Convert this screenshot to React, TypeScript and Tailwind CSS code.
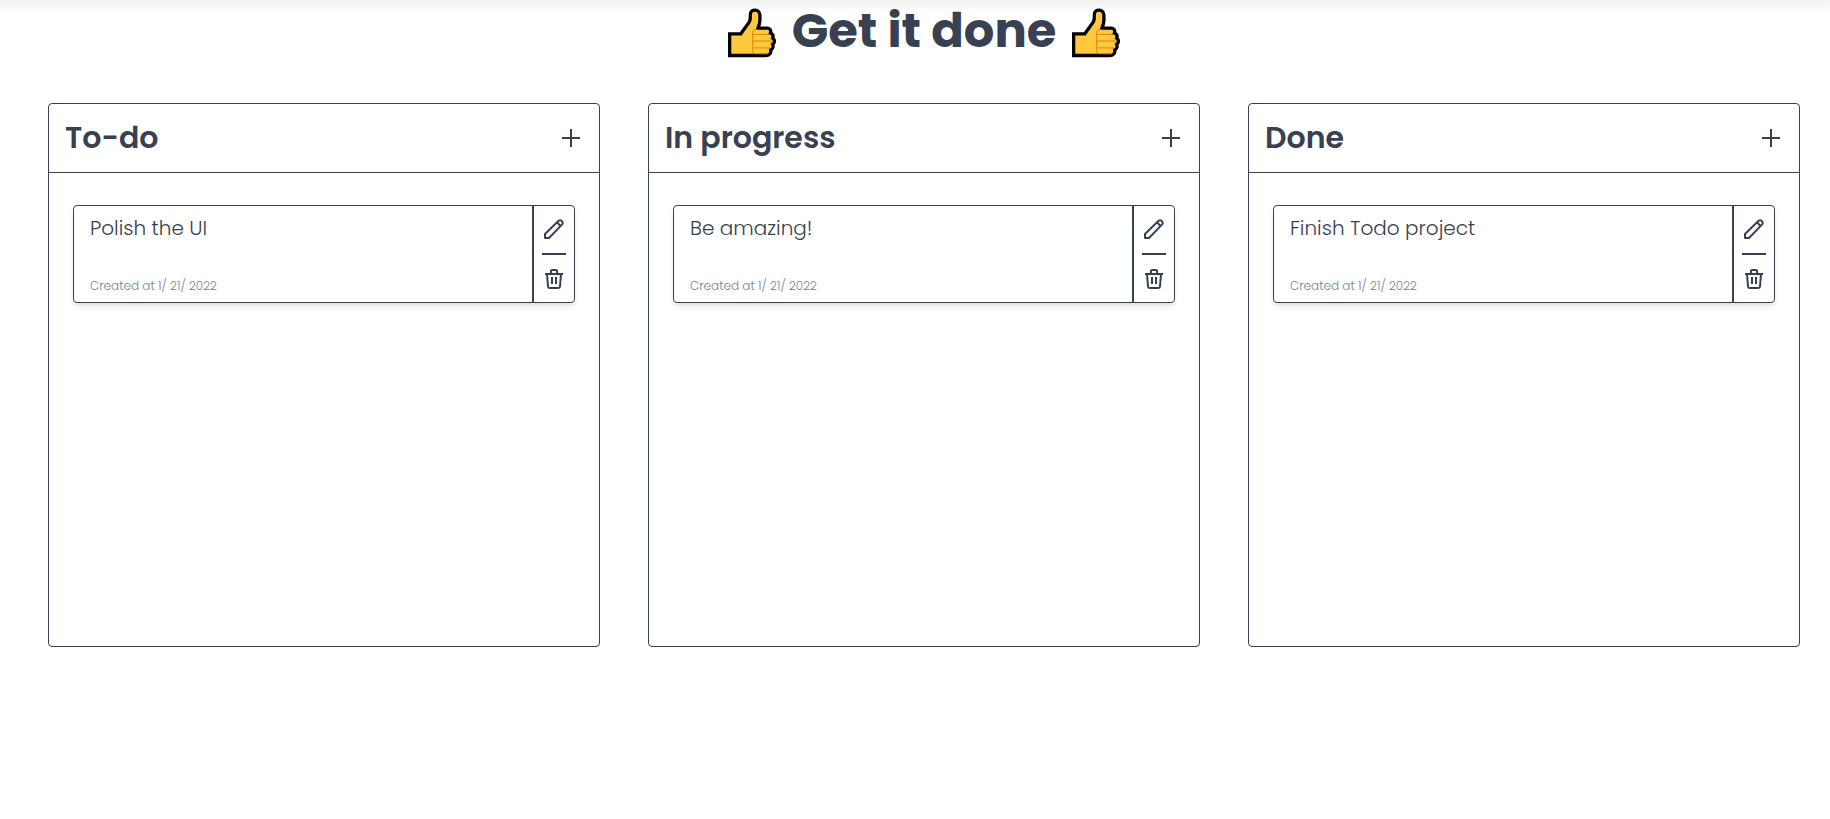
import { useState } from "react";

interface Task {
  id: number;
  text: string;
  createdAt: string;
}

interface Column {
  name: string;
  tasks: Task[];
}

const initialColumns: Column[] = [
  {
    name: "To-do",
    tasks: [{ id: 1, text: "Polish the UI", createdAt: "1/ 21/ 2022" }],
  },
  {
    name: "In progress",
    tasks: [{ id: 2, text: "Be amazing!", createdAt: "1/ 21/ 2022" }],
  },
  {
    name: "Done",
    tasks: [{ id: 3, text: "Finish Todo project", createdAt: "1/ 21/ 2022" }],
  },
];

function ThumbsUp() {
  return (
    <svg viewBox="23 11 146 161" className="h-[54px] w-12" aria-hidden="true">
      <path
        d="M28 100H62L88 64C91 59 91 52 91 45V41C91 23 120 23 120 43V60C120 68 117 75 114 83H142C151 83 155 90 152 98C160 100 162 107 159 113C166 118 166 128 159 132C162 139 159 147 153 149C155 158 149 166 140 166H28Z"
        fill="#ffc83d"
        stroke="#000"
        strokeWidth="10"
      />
      <path
        d="M113 87H107Q98 87 98 96V152Q98 161 107 161H146M98 102H148M98 122H156M98 143H151"
        fill="none"
        stroke="#d67d00"
        strokeWidth="3"
        opacity="0.85"
      />
    </svg>
  );
}

function PlusIcon() {
  return (
    <svg viewBox="0 0 24 24" className="size-6" fill="none" stroke="currentColor" strokeWidth="2">
      <path d="M12 3v18M3 12h18" />
    </svg>
  );
}

function PencilIcon() {
  return (
    <svg
      viewBox="0 0 20 20"
      className="size-5"
      fill="none"
      stroke="currentColor"
      strokeWidth="2"
      strokeLinejoin="round"
    >
      <path d="M1 19v-4L14.6 1.8a2.6 2.6 0 0 1 3.6 3.6L5 19Z" />
      <path d="M13 3.4l3.6 3.600" />
    </svg>
  );
}

function TrashIcon() {
  return (
    <svg
      viewBox="0 0 20 20"
      className="size-5"
      fill="none"
      stroke="currentColor"
      strokeWidth="2"
      strokeLinejoin="round"
    >
      <path d="M1 5h18" />
      <path d="M7 5V2q0-1 1-1h4q1 0 1 1v3" />
      <path d="M3 5l1 12.5q.1 1.5 1.5 1.5h9q1.4 0 1.5-1.5L17 5" />
      <path d="M8 8v7M12 8v7" />
    </svg>
  );
}

function TaskCard({ task, onDelete }: { task: Task; onDelete: () => void }) {
  return (
    <li className="flex min-h-[98px] rounded border border-[#374151] shadow-md">
      <div className="flex min-w-0 flex-1 flex-col justify-between px-4 py-2">
        <p className="text-xl font-light">{task.text}</p>
        <p className="text-xs font-light text-[#7b818c]">
          Created at {task.createdAt}
        </p>
      </div>
      <div className="flex flex-col items-center justify-center gap-[14px] border-l-2 border-[#374151] px-2">
        <button type="button" aria-label="Edit task">
          <PencilIcon />
        </button>
        <hr className="w-6 border-t-2 border-[#374151]" />
        <button type="button" aria-label="Delete task" onClick={onDelete}>
          <TrashIcon />
        </button>
      </div>
    </li>
  );
}

export default function App() {
  const [columns, setColumns] = useState(initialColumns);

  const addTask = (name: string) => {
    const now = new Date();
    const createdAt = `${now.getMonth() + 1}/ ${now.getDate()}/ ${now.getFullYear()}`;
    setColumns((prev) =>
      prev.map((col) =>
        col.name === name
          ? {
              ...col,
              tasks: [...col.tasks, { id: Date.now(), text: "New task", createdAt }],
            }
          : col,
      ),
    );
  };

  const deleteTask = (id: number) => {
    setColumns((prev) =>
      prev.map((col) => ({
        ...col,
        tasks: col.tasks.filter((task) => task.id !== id),
      })),
    );
  };

  return (
    <div className="min-h-screen bg-white bg-linear-to-b from-[#f1f1f1] to-white to-[12px] font-['Poppins','Inter',sans-serif] text-[#374151]">
      <main className="pr-[30px] pl-12">
        {/* Title */}
        <h1 className="flex items-center justify-center gap-4 pb-[41px] text-5xl leading-[62px] font-bold">
          <ThumbsUp />
          Get it done
          <ThumbsUp />
        </h1>

        {/* Board */}
        <div className="grid grid-cols-3 gap-12">
          {columns.map((col) => (
            <section
              key={col.name}
              className="min-h-[544px] rounded border border-[#374151]"
            >
              <header className="flex items-center justify-between border-b border-[#374151] p-4">
                <h2 className="text-3xl font-semibold">{col.name}</h2>
                <button
                  type="button"
                  aria-label={`Add task to ${col.name}`}
                  onClick={() => addTask(col.name)}
                >
                  <PlusIcon />
                </button>
              </header>
              <ul className="flex flex-col gap-6 px-6 py-8">
                {col.tasks.map((task) => (
                  <TaskCard
                    key={task.id}
                    task={task}
                    onDelete={() => deleteTask(task.id)}
                  />
                ))}
              </ul>
            </section>
          ))}
        </div>
      </main>
    </div>
  );
}
